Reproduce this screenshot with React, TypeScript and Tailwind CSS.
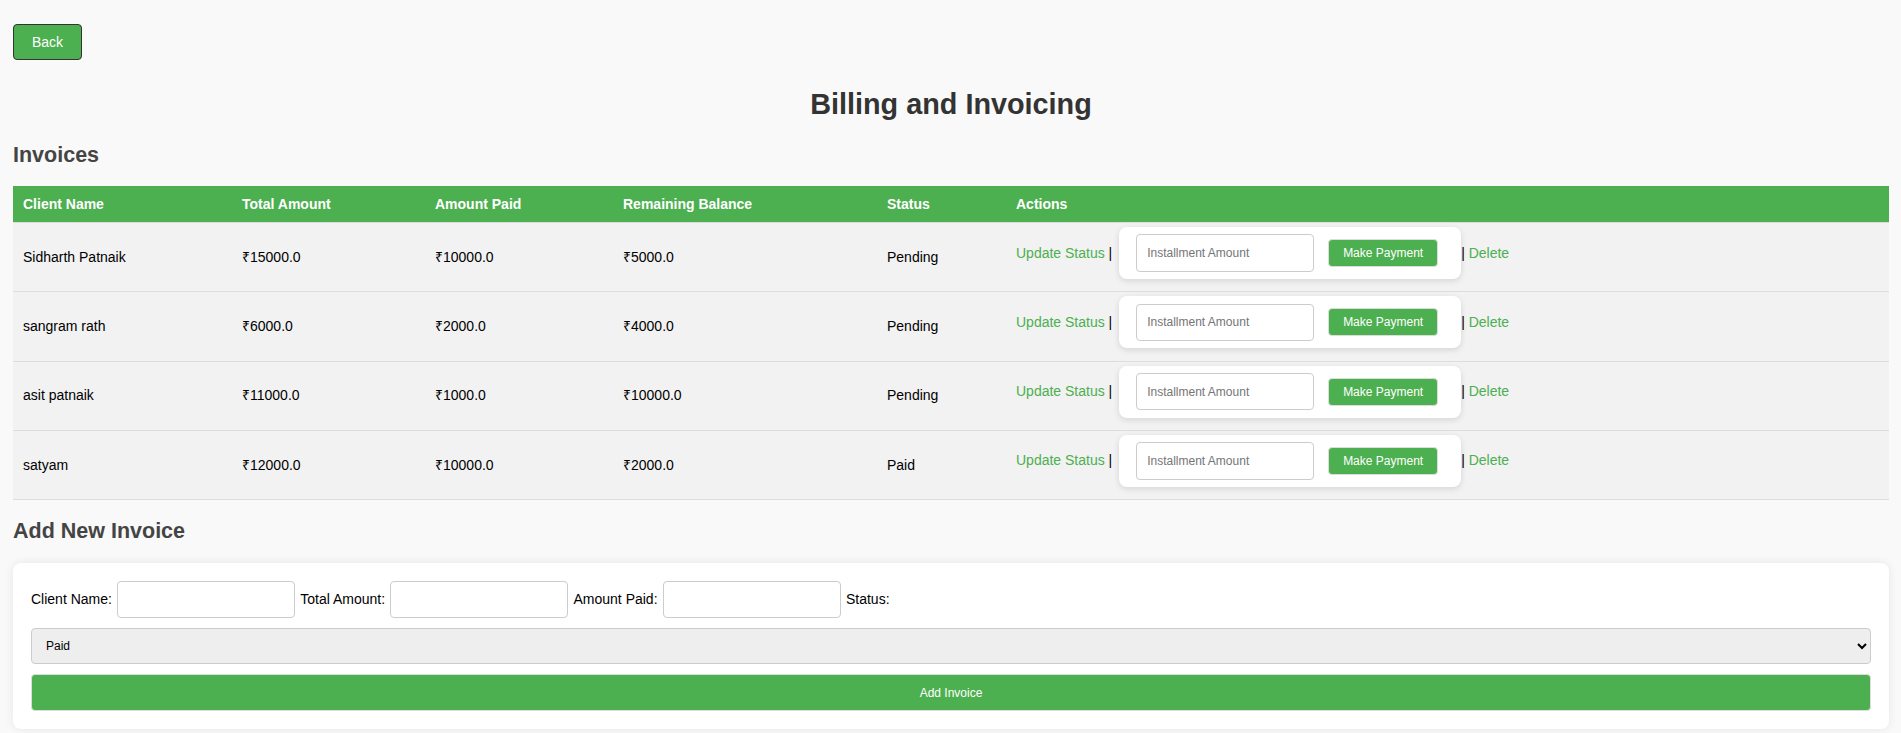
import React, { useState } from 'react';

type Invoice = {
  client: string;
  total: string;
  paid: string;
  remaining: string;
  status: string;
};

const invoices: Invoice[] = [
  { client: 'Sidharth Patnaik', total: '₹15000.0', paid: '₹10000.0', remaining: '₹5000.0', status: 'Pending' },
  { client: 'sangram rath', total: '₹6000.0', paid: '₹2000.0', remaining: '₹4000.0', status: 'Pending' },
  { client: 'asit patnaik', total: '₹11000.0', paid: '₹1000.0', remaining: '₹10000.0', status: 'Pending' },
  { client: 'satyam', total: '₹12000.0', paid: '₹10000.0', remaining: '₹2000.0', status: 'Paid' },
];

const cols = 'grid grid-cols-[219px_193px_188px_264px_129px_1fr]';
const inputCss =
  'w-[178px] h-[37.33px] px-[10px] bg-white border border-[#ccc] rounded-[4px] text-[12px] text-black placeholder:text-[#757575] outline-none';

const App = () => {
  const [status, setStatus] = useState('Paid');

  return (
    <div className="min-h-screen bg-[#f9f9f9] pl-[13px] pr-[12px] pt-[24px] pb-[40px] font-['Liberation_Sans',Arial,sans-serif] text-[14px]">
      <button className="w-[69px] h-[36px] bg-[#4caf50] text-white text-[14px] border border-[#333] rounded-[4px]">
        Back
      </button>

      <h1 className="mt-[26.5px] text-center text-[28.8px] leading-[34px] font-bold text-[#333]">
        Billing and Invoicing
      </h1>

      <h2 className="mt-[21px] text-[21.5px] leading-[26px] font-bold text-[#444]">Invoices</h2>

      <div className="mt-[18.5px]">
        <div className={`${cols} h-[37px] items-center bg-[#4caf50] text-white font-bold border-b border-[#ddd]`}>
          <div className="px-[10px]">Client Name</div>
          <div className="px-[10px]">Total Amount</div>
          <div className="px-[10px]">Amount Paid</div>
          <div className="px-[10px]">Remaining Balance</div>
          <div className="px-[10px]">Status</div>
          <div className="px-[10px]">Actions</div>
        </div>
        {invoices.map((inv) => (
          <div
            key={inv.client}
            className={`${cols} h-[69.33px] items-center bg-[#f2f2f2] border-b border-[#ddd] text-black`}
          >
            <div className="px-[10px]">{inv.client}</div>
            <div className="px-[10px]">{inv.total}</div>
            <div className="px-[10px]">{inv.paid}</div>
            <div className="px-[10px]">{inv.remaining}</div>
            <div className="px-[10px]">{inv.status}</div>
            <div className="self-start pt-[4px] px-[10px] flex items-center h-[56px]">
              <button className="text-[#4caf50]">Update Status</button>
              <span className="whitespace-pre"> | </span>
              <div className="ml-[3px] w-[342px] h-[52px] bg-white rounded-[8px] shadow-[0_2px_6px_rgba(0,0,0,0.12)] flex items-center pl-[17px]">
                <input className={inputCss} placeholder="Installment Amount" />
                <button className="ml-[14px] w-[110px] h-[28px] bg-[#4caf50] text-white text-[12px] border border-[#ddd] rounded-[4px]">
                  Make Payment
                </button>
              </div>
              <span className="whitespace-pre">| </span>
              <button className="text-[#4caf50]">Delete</button>
            </div>
          </div>
        ))}
      </div>

      <h2 className="mt-[18px] text-[21.5px] leading-[26px] font-bold text-[#444]">Add New Invoice</h2>

      <div className="mt-[18.5px] bg-white rounded-[8px] shadow-[0_0_10px_rgba(0,0,0,0.08)] px-[18px] pt-[18.33px] pb-[18px] flex flex-col gap-[10px]">
        <div className="flex items-center gap-[5.2px] text-black">
          <label>Client Name:</label>
          <input className={inputCss} />
          <label>Total Amount:</label>
          <input className={inputCss} />
          <label>Amount Paid:</label>
          <input className={inputCss} />
          <label>Status:</label>
        </div>
        <select
          value={status}
          onChange={(e) => setStatus(e.target.value)}
          className="w-full h-[36px] pl-[10px] pr-[6px] bg-[#eee] border border-[#ccc] rounded-[4px] text-[12px] text-black"
        >
          <option>Paid</option>
          <option>Pending</option>
        </select>
        <button className="w-full h-[36.67px] bg-[#4caf50] text-white text-[12px] border border-[#ddd] rounded-[4px]">
          Add Invoice
        </button>
      </div>
    </div>
  );
};

export default App;
